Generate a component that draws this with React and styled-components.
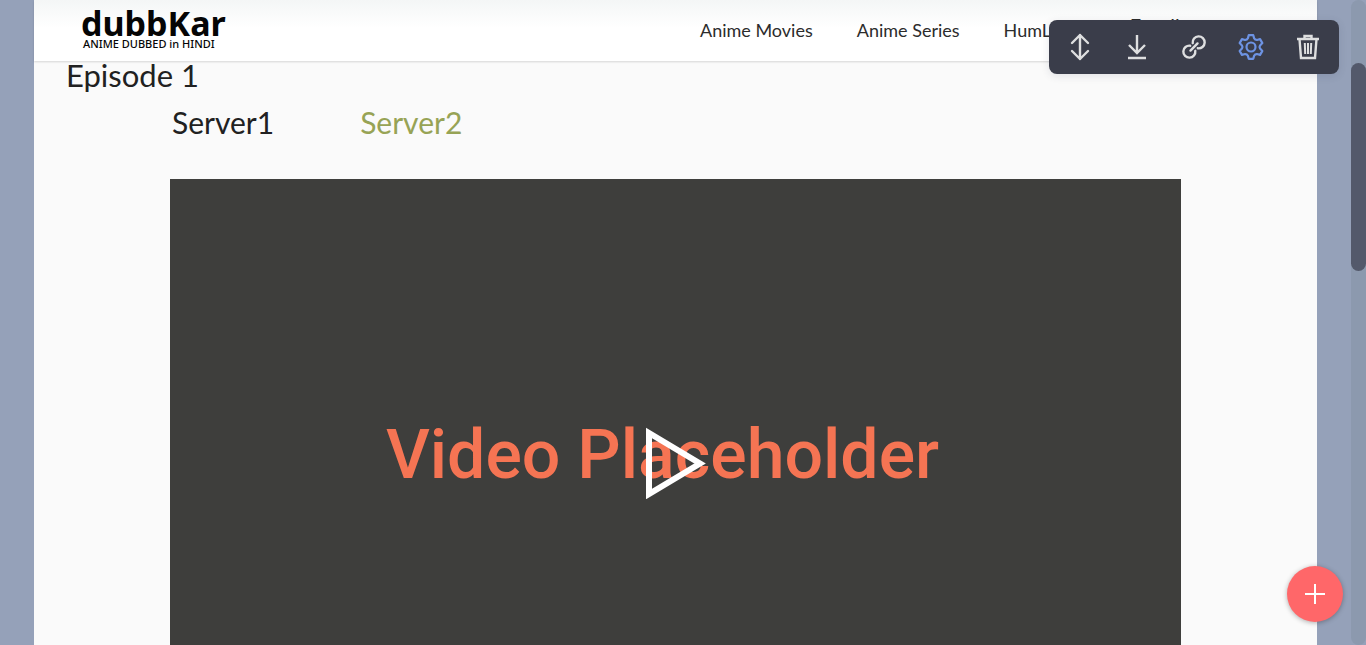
import React from 'react';
import styled, { createGlobalStyle } from 'styled-components';

const GlobalStyle = createGlobalStyle`
  * { box-sizing: border-box; }
  body { margin: 0; background: #95a1b9; overflow: hidden; font-family: Lato, "Liberation Sans", sans-serif; color: #212121; }
  button { font: inherit; border: 0; padding: 0; cursor: pointer; }
  a { color: inherit; text-decoration: none; }
  h1, p { margin: 0; }
`;

const Shell = styled.div`
  display: flex;
  height: 100vh;
  overflow: hidden;
`;

const Page = styled.div`
  flex: 1;
  min-width: 0;
  margin: 0 34px;
  background: #fafafa;
`;

const Header = styled.header`
  display: flex;
  align-items: center;
  justify-content: space-between;
  height: 61px;
  padding: 0 92px 2px 47px;
  background: linear-gradient(#f4f6f6, #ffffff 28px);
  box-shadow: 0 1px 2px rgba(0, 0, 0, 0.15);
`;

const Brand = styled.a`
  display: flex;
  flex-direction: column;
  font-family: "Noto Sans", sans-serif;
  color: #050505;
`;

const BrandName = styled.span`
  font-size: 34px;
  line-height: 28px;
  font-weight: 700;
`;

const BrandTag = styled.span`
  padding-left: 2px;
  font-size: 11px;
  line-height: 14px;
  font-weight: 500;
`;

const Nav = styled.nav`
  display: flex;
  align-items: center;
  gap: 44px;
  font-size: 18px;
  line-height: 24px;
`;

const NavLink = styled.a`
  color: #2c2c2c;
  white-space: nowrap;
`;

const NavAction = styled(NavLink)`
  padding: 0 0 10px 8px;
  font-size: 20px;
`;

const Content = styled.main`
  padding: 0 32px;
`;

const Title = styled.h1`
  font-size: 31px;
  line-height: 28px;
  font-weight: 400;
`;

const Servers = styled.div`
  display: flex;
  gap: 86px;
  padding: 14px 0 38px 106px;
`;

const ServerTab = styled.button`
  background: none;
  font-size: 30px;
  line-height: 38px;
  color: ${({ $active }) => ($active ? '#212121' : '#97a355')};
`;

const Video = styled.section`
  display: grid;
  place-items: center;
  margin: 0 104px;
  height: 568px;
  background: #3e3e3c;
`;

const VideoText = styled.p`
  grid-area: 1 / 1;
  font-family: Roboto, sans-serif;
  font-size: 68px;
  line-height: 80px;
  font-weight: 500;
  color: #f57453;
  padding: 0 26px 16px 0;
`;

const PlayButton = styled.button`
  grid-area: 1 / 1;
  display: flex;
  background: none;
`;

const ScrollTrack = styled.div`
  width: 15px;
  padding-top: 63px;
  border-radius: 8px;
  background: #8c99ae;
`;

const ScrollThumb = styled.div`
  height: 208px;
  border-radius: 8px;
  background: #53596b;
`;

const Toolbar = styled.div`
  position: fixed;
  top: 20px;
  right: 27px;
  display: flex;
  align-items: center;
  gap: 29px;
  height: 54px;
  padding: 0 17px;
  border-radius: 8px;
  background: #3a3d4a;
  box-shadow: 0 2px 8px rgba(40, 50, 70, 0.12);
`;

const ToolButton = styled.button`
  display: flex;
  background: none;
  color: ${({ $active }) => ($active ? '#6d93e3' : '#dedfe0')};
`;

const AddButton = styled.button`
  position: fixed;
  right: 23px;
  bottom: 23px;
  display: grid;
  place-items: center;
  width: 56px;
  height: 56px;
  border-radius: 50%;
  background: #ff6769;
  box-shadow: 0 1px 5px rgba(0, 0, 0, 0.3);
`;

const Icon = ({ children }) => (
  <svg width="28" height="28" viewBox="0 0 28 28" fill="none" stroke="currentColor" strokeWidth="2.4" aria-hidden="true">
    {children}
  </svg>
);

const gear = Array.from({ length: 6 }, (_, i) => {
  const at = (r, deg) => {
    const t = ((i * 60 + deg - 90) * Math.PI) / 180;
    return `${(14 + r * Math.cos(t)).toFixed(2)} ${(14 + r * Math.sin(t)).toFixed(2)}`;
  };
  return `${i ? 'L' : 'M'}${at(9.2, -20)}L${at(12, -11)}L${at(12, 11)}L${at(9.2, 20)}Q${at(8, 30)} ${at(9.2, 40)}`;
}).join('') + 'Z';

const tools = [
  { name: 'Resize height', icon: <path d="M14 2v24M6 10l8-8 8 8M6 18l8 8 8-8" strokeLinecap="round" strokeLinejoin="round" /> },
  { name: 'Download', icon: <path d="M14 2v18M6 12l8 8 8-8M5 25h18" /> },
  {
    name: 'Copy link',
    icon: (
      <path
        transform="rotate(-45 14 14)"
        strokeLinecap="round"
        d="M12.200 17.600A6 6 0 1 1 12.200 10.400M15.800 10.400A6 6 0 1 1 15.800 17.600M9 14h10"
      />
    ),
  },
  {
    name: 'Settings',
    active: true,
    icon: (
      <g strokeWidth="2.2">
        <path d={gear} strokeLinejoin="round" />
        <circle cx="14" cy="14" r="4.500" />
      </g>
    ),
  },
  {
    name: 'Delete',
    icon: (
      <>
        <path d="M3 6h22M10.500 5V3h7v2M5.500 6l1.500 19h14l1.500-19" />
        <path d="M10.800 10l.4 11M14 10v11M17.200 10l-.4 11" strokeWidth="2" />
      </>
    ),
  },
];

export default function App() {
  return (
    <>
      <GlobalStyle />
      <Shell>
        <Page>
          <Header>
            <Brand href="#">
              <BrandName>dubbKar</BrandName>
              <BrandTag>ANIME DUBBED in HINDI</BrandTag>
            </Brand>
            <Nav>
              <NavLink href="#">Anime Movies</NavLink>
              <NavLink href="#">Anime Series</NavLink>
              <NavLink href="#">HumLogs</NavLink>
              <NavAction href="#">Enrollment</NavAction>
            </Nav>
          </Header>
          <Content>
            <Title>Episode 1</Title>
            <Servers>
              <ServerTab $active>Server1</ServerTab>
              <ServerTab>Server2</ServerTab>
            </Servers>
            <Video>
              <VideoText>Video Placeholder</VideoText>
              <PlayButton aria-label="Play video">
                <svg width="60" height="72" viewBox="0 0 60 72" fill="none" stroke="#fff" strokeWidth="6">
                  <path d="M3 6v61l51-30.500z" />
                </svg>
              </PlayButton>
            </Video>
          </Content>
        </Page>
        <ScrollTrack>
          <ScrollThumb />
        </ScrollTrack>
      </Shell>
      <Toolbar role="toolbar" aria-label="Page tools">
        {tools.map((tool) => (
          <ToolButton key={tool.name} $active={tool.active} aria-label={tool.name}>
            <Icon>{tool.icon}</Icon>
          </ToolButton>
        ))}
      </Toolbar>
      <AddButton aria-label="Add">
        <svg width="20" height="20" viewBox="0 0 20 20" stroke="#fff" strokeWidth="2" aria-hidden="true">
          <path d="M10 0v20M0 10h20" />
        </svg>
      </AddButton>
    </>
  );
}
